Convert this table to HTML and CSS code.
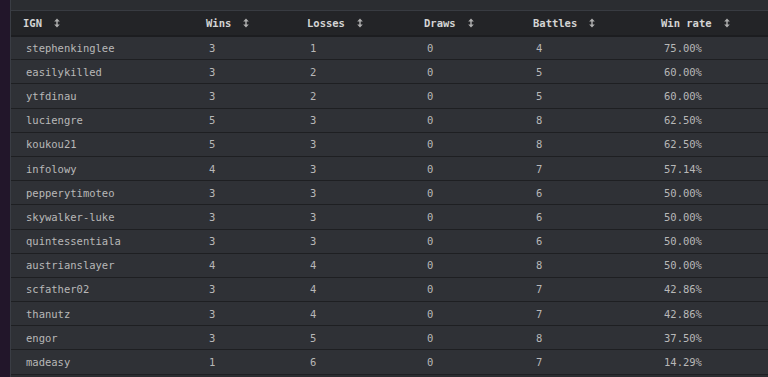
FILE: index.html
```html
<!DOCTYPE html>
<html lang="en">
<head>
  <meta charset="utf-8">
  <title>Leaderboard</title>
  <meta name="viewport" content="width=device-width, initial-scale=1">
  <link rel="stylesheet" href="styles.css">
</head>
<body>
  <div class="panel">
    <table class="board">
      <colgroup>
        <col class="col-ign">
        <col class="col-wins">
        <col class="col-losses">
        <col class="col-draws">
        <col class="col-battles">
        <col class="col-rate">
      </colgroup>
      <thead>
        <tr>
          <th><span class="th-title">IGN</span><span class="sort"></span></th>
          <th><span class="th-title">Wins</span><span class="sort"></span></th>
          <th><span class="th-title">Losses</span><span class="sort"></span></th>
          <th><span class="th-title">Draws</span><span class="sort"></span></th>
          <th><span class="th-title">Battles</span><span class="sort"></span></th>
          <th><span class="th-title">Win rate</span><span class="sort"></span></th>
        </tr>
      </thead>
      <tbody>
        <tr><td>stephenkinglee</td><td>3</td><td>1</td><td>0</td><td>4</td><td>75.00%</td></tr>
        <tr><td>easilykilled</td><td>3</td><td>2</td><td>0</td><td>5</td><td>60.00%</td></tr>
        <tr><td>ytfdinau</td><td>3</td><td>2</td><td>0</td><td>5</td><td>60.00%</td></tr>
        <tr><td>luciengre</td><td>5</td><td>3</td><td>0</td><td>8</td><td>62.50%</td></tr>
        <tr><td>koukou21</td><td>5</td><td>3</td><td>0</td><td>8</td><td>62.50%</td></tr>
        <tr><td>infolowy</td><td>4</td><td>3</td><td>0</td><td>7</td><td>57.14%</td></tr>
        <tr><td>pepperytimoteo</td><td>3</td><td>3</td><td>0</td><td>6</td><td>50.00%</td></tr>
        <tr><td>skywalker-luke</td><td>3</td><td>3</td><td>0</td><td>6</td><td>50.00%</td></tr>
        <tr><td>quintessentiala</td><td>3</td><td>3</td><td>0</td><td>6</td><td>50.00%</td></tr>
        <tr><td>austrianslayer</td><td>4</td><td>4</td><td>0</td><td>8</td><td>50.00%</td></tr>
        <tr><td>scfather02</td><td>3</td><td>4</td><td>0</td><td>7</td><td>42.86%</td></tr>
        <tr><td>thanutz</td><td>3</td><td>4</td><td>0</td><td>7</td><td>42.86%</td></tr>
        <tr><td>engor</td><td>3</td><td>5</td><td>0</td><td>8</td><td>37.50%</td></tr>
        <tr><td>madeasy</td><td>1</td><td>6</td><td>0</td><td>7</td><td>14.29%</td></tr>
      </tbody>
    </table>
  </div>
</body>
</html>
```
FILE: styles.css
```css
*, *::before, *::after {
  margin: 0;
  padding: 0;
  box-sizing: border-box;
}

body {
  overflow: hidden;
  background-color: #22162a;
  font-family: "DejaVu Sans Mono", "Liberation Mono", monospace;
  font-size: 10.5px;
}

.panel {
  width: calc(100% - 10px);
  min-height: 377px;
  margin-left: 10px;
  padding-top: 10px;
  overflow: hidden;
  border-left: 1px solid #3a3d44;
  background-color: #2b2d31;
}

.board {
  width: 810px;
  table-layout: fixed;
  border-collapse: collapse;
  border-top: 1px solid #383b41;
}

.col-ign { width: 183px; }
.col-wins { width: 101px; }
.col-losses { width: 117px; }
.col-draws { width: 109px; }
.col-battles { width: 128px; }

th {
  height: 25px;
  padding-left: 12px;
  background-color: #232427;
  border-bottom: 2px solid #1c1d20;
  color: #d4d4d4;
  font-weight: bold;
  text-align: left;
  white-space: nowrap;
}

.th-title {
  display: inline-block;
  vertical-align: middle;
}

.sort {
  display: inline-block;
  width: 6px;
  height: 10px;
  margin-left: 12px;
  vertical-align: middle;
  background-image: url("data:image/svg+xml,%3Csvg xmlns='http://www.w3.org/2000/svg' viewBox='0 0 6 10'%3E%3Cpath d='M3 0.5L5.8 3.5H0.2Z M3 9.5L5.8 6.5H0.2Z' fill='%23b0b0b0'/%3E%3Cpath d='M3 3V7' stroke='%23b0b0b0' stroke-width='1.4'/%3E%3C/svg%3E");
  background-repeat: no-repeat;
  background-size: 100%;
}

td {
  height: 24.2px;
  padding-left: 15px;
  background-color: #2f3136;
  border-bottom: 1px solid #1e1f22;
  color: #b8b8b8;
  white-space: nowrap;
}
```
